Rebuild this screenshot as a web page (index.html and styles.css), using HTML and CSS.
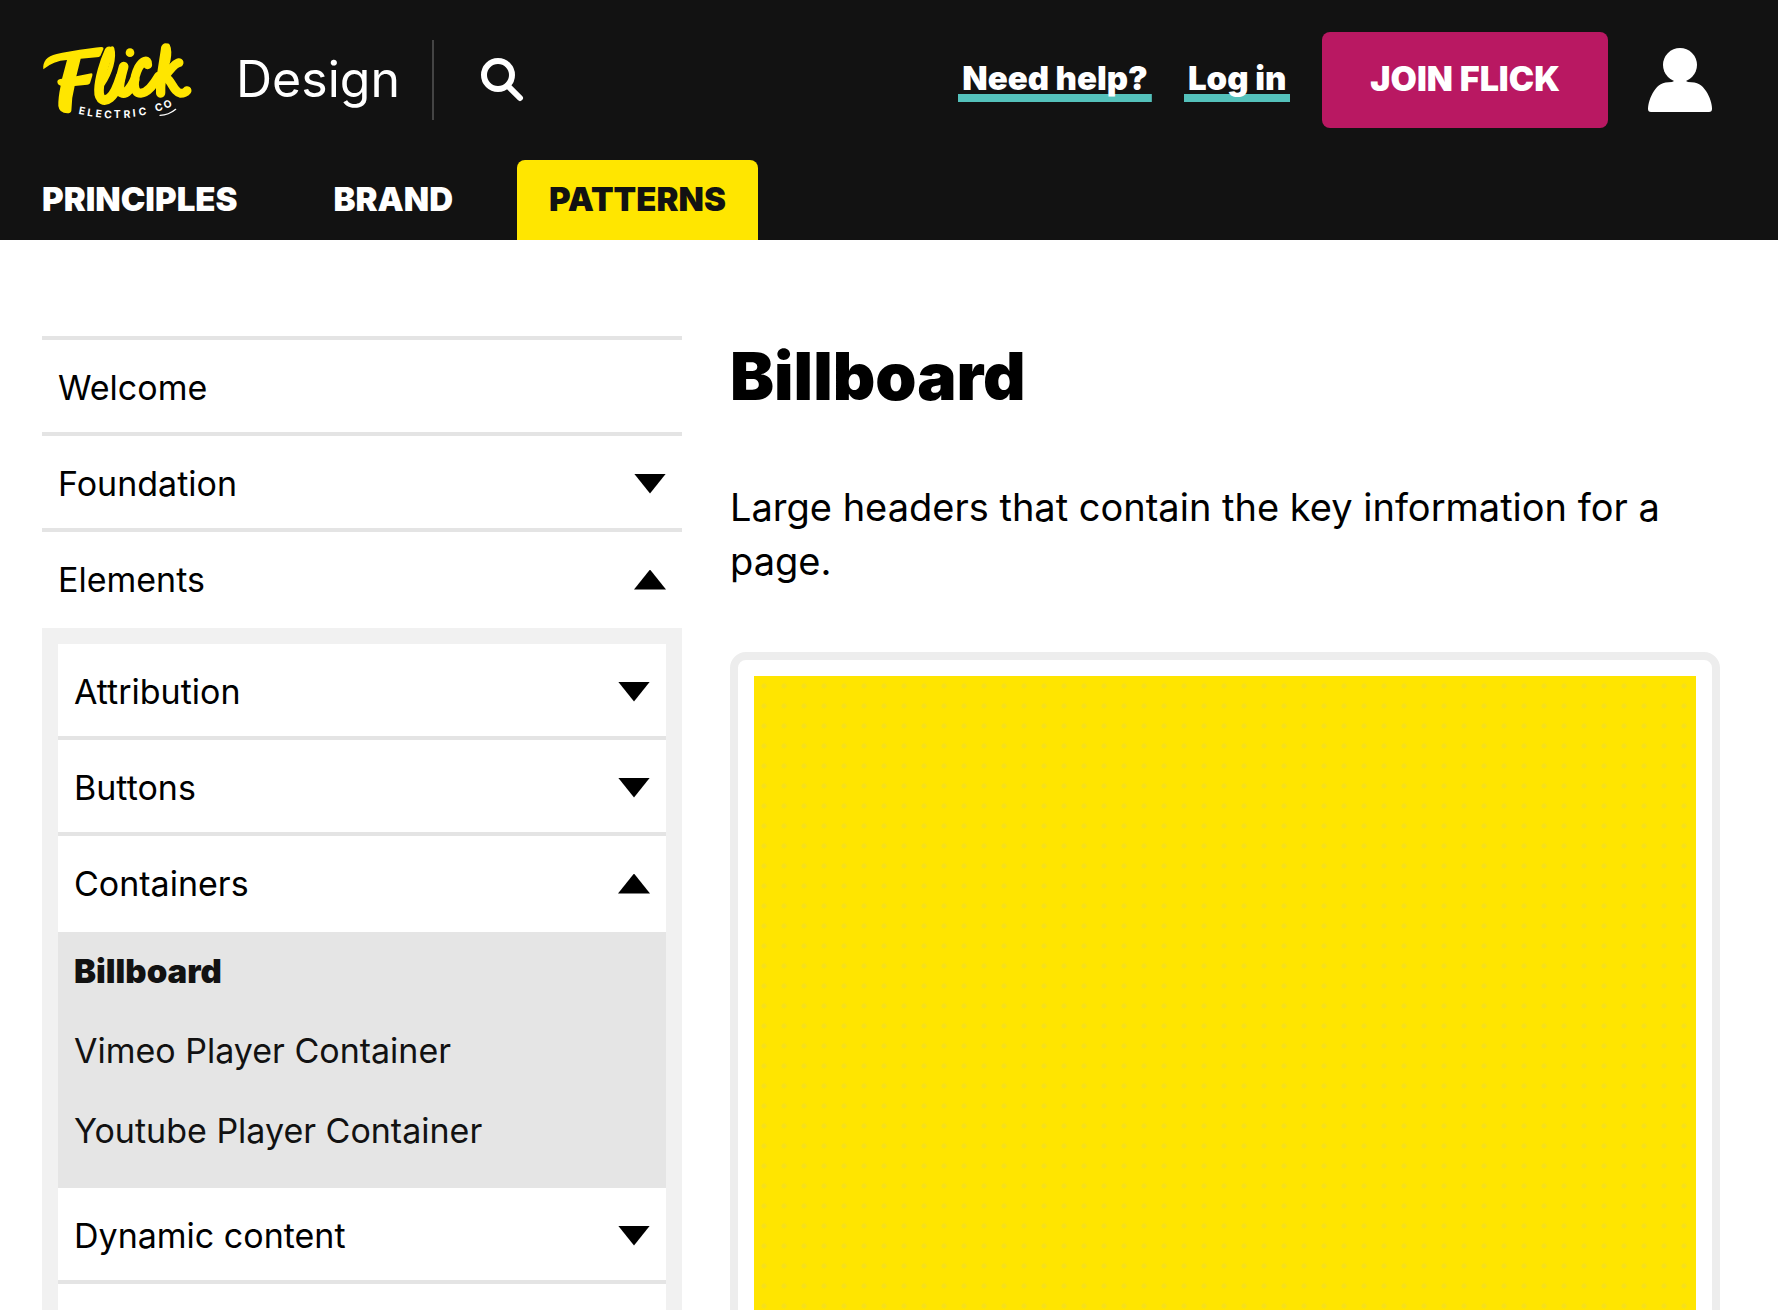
FILE: index.html
```html
<!DOCTYPE html>
<html lang="en">
<head>
<meta charset="utf-8">
<meta name="viewport" content="width=device-width, initial-scale=1">
<title>Billboard - Flick Design</title>
<link rel="stylesheet" href="styles.css">
</head>
<body>
<header class="header">
  <div class="topbar">
    <a class="logo" href="#" aria-label="Flick Electric Co">
      <svg width="152" height="80" viewBox="36 30 456 240" fill="none" stroke-linecap="round" stroke-linejoin="round">
        <path fill="#ffe600" d="M40 118C38 95 50 78 80 72C125 62 175 55 214 51Q222 51 220 58L211 78Q208 82 200 82L152 86L139 139L184 130Q189 130 187 137L180 160Q178 164 172 164L134 168Q124 205 124 243Q122 250 112 250Q88 250 85 228Q84 205 92 167Q82 165 82 154Q84 146 96 146L111 90Q70 92 40 118Z"/>
        <g stroke="#ffe600">
          <path stroke-width="29" d="M238 64C224 95 208 145 207 180C206 212 224 216 240 203C256 190 264 165 272 140"/>
          <path stroke-width="14" d="M246 56C254 85 240 130 218 162"/>
          <path stroke-width="29" d="M281 110C271 145 263 178 275 188C288 194 302 176 314 150"/>
          <path stroke-width="27" d="M353 104C354 86 338 92 326 112C308 148 308 190 332 190C354 188 370 165 386 138"/>
          <path stroke-width="28" d="M407 54C404 85 390 140 392 189"/>
          <path stroke-width="14" d="M413 48C423 70 412 110 398 138"/>
          <path stroke-width="27" d="M447 98C436 100 420 118 402 142"/>
          <path stroke-width="27" d="M406 142C426 150 430 186 452 190C462 190 468 186 471 182"/>
        </g>
        <circle cx="300" cy="68" r="13" fill="#ffe600"/>
        <text class="logo-text" x="145 170 196 222 251 281 309 328 379 406" y="251 257 261 264 265 264 260 257 246 237" rotate="11 9 6 3 0 -3 -6 -9 -18 -22">ELECTRICCO</text>
        <path stroke="#fff" stroke-width="4" d="M390 256Q416 256 437 238"/>
      </svg>
    </a>
    <span class="product">Design</span>
    <button class="icon-button search" aria-label="Search">
      <svg width="44" height="46" viewBox="0 0 44 46" fill="none" stroke="#fff" stroke-linecap="round">
        <circle cx="18" cy="18" r="14" stroke-width="6"/>
        <path stroke-width="6" d="M28 29L40 41"/>
      </svg>
    </button>
    <div class="account">
      <a class="text-link" href="#">Need help?</a>
      <a class="text-link" href="#">Log in</a>
      <button class="join">JOIN FLICK</button>
      <button class="icon-button user" aria-label="My account">
        <svg width="64" height="64" viewBox="0 0 64 64" fill="#fff">
          <circle cx="32" cy="17" r="17"/>
          <path d="M24 34L28 32H36L40 34C50 34 54 37 58 43C62 49 64 56 64 61Q64 64 61 64H3Q0 64 0 61C0 56 2 49 6 43C10 37 14 34 24 34Z"/>
        </svg>
      </button>
    </div>
  </div>
  <nav class="tabs" aria-label="Sections">
    <a class="tab" href="#">PRINCIPLES</a>
    <a class="tab" href="#">BRAND</a>
    <a class="tab tab-active" href="#" aria-current="page">PATTERNS</a>
  </nav>
</header>
<div class="content">
  <nav class="sidebar" aria-label="Patterns">
    <a class="row" href="#">Welcome</a>
    <button class="row">Foundation<span class="arrow"></span></button>
    <button class="row row-open" aria-expanded="true">Elements<span class="arrow arrow-up"></span></button>
    <div class="group">
      <button class="row">Attribution<span class="arrow"></span></button>
      <button class="row">Buttons<span class="arrow"></span></button>
      <button class="row row-open" aria-expanded="true">Containers<span class="arrow arrow-up"></span></button>
      <div class="pages">
        <a class="page-link page-current" href="#" aria-current="page">Billboard</a>
        <a class="page-link" href="#">Vimeo Player Container</a>
        <a class="page-link" href="#">Youtube Player Container</a>
      </div>
      <button class="row">Dynamic content<span class="arrow"></span></button>
      <button class="row" aria-label="More elements"></button>
    </div>
  </nav>
  <main class="main">
    <h1 class="title">Billboard</h1>
    <p class="intro">Large headers that contain the key information for a page.</p>
    <div class="frame"><div class="billboard"></div></div>
  </main>
</div>
</body>
</html>
```
FILE: styles.css
```css
* { box-sizing: border-box; }

body {
  display: flex;
  flex-direction: column;
  height: 100vh;
  margin: 0;
  overflow: hidden;
  background: #fff;
  color: #000;
  font-family: Inter, "Liberation Sans", sans-serif;
  font-size: 34px;
  line-height: 40px;
}

a { color: inherit; text-decoration: none; }

button {
  margin: 0;
  padding: 0;
  border: 0;
  background: none;
  color: inherit;
  font: inherit;
  text-align: left;
  cursor: pointer;
}

svg { display: block; }

.header {
  flex: none;
  background: #121212;
  color: #fff;
}

.topbar {
  display: flex;
  align-items: center;
  height: 160px;
  padding: 0 66px 0 42px;
}

.logo-text {
  fill: #fff;
  font-size: 31px;
  font-weight: 700;
}

.product {
  display: flex;
  align-items: center;
  height: 80px;
  margin-left: 42px;
  padding: 0 32px 2px 0;
  border-right: 2px solid #444;
  font-size: 50px;
}

.search { margin-left: 46px; }

.account {
  display: flex;
  align-items: center;
  gap: 32px;
  margin-left: auto;
}

.text-link {
  padding: 0 4px 4px;
  background: linear-gradient(#54c1bb, #54c1bb) bottom / 100% 8px no-repeat;
  font-size: 33px;
  font-weight: 900;
}

.join {
  height: 96px;
  padding: 0 48px 2px;
  border-radius: 8px;
  background: #b91862;
  font-weight: 900;
}

.user { margin-left: 8px; }

.tabs {
  display: flex;
  gap: 32px;
  padding: 0 10px;
}

.tab {
  padding: 0 32px 2px;
  border-radius: 8px 8px 0 0;
  font-size: 33px;
  font-weight: 900;
  line-height: 78px;
}

.tab-active {
  background: #ffe600;
  color: #121212;
}

.content {
  display: grid;
  grid-template-columns: 640fr 990fr;
  gap: 48px;
  flex: 1;
  min-height: 0;
  padding: 96px 58px 0 42px;
}

.sidebar { border-top: 4px solid #e4e4e4; }

.row {
  display: flex;
  align-items: center;
  justify-content: space-between;
  width: 100%;
  height: 96px;
  padding: 3px 16px 0;
  border-bottom: 4px solid #e4e4e4;
  background: #fff;
}

.row-open { border-bottom-color: #fff; }

.arrow {
  width: 32px;
  height: 20px;
  background: #000;
  clip-path: polygon(0 0, 100% 0, 50% 100%);
}

.arrow-up { clip-path: polygon(50% 0, 100% 100%, 0 100%); }

.group {
  padding: 16px;
  background: #f1f1f1;
}

.pages {
  padding-bottom: 16px;
  background: #e5e5e5;
  color: #121212;
}

.page-link {
  display: block;
  padding: 0 16px 2px;
  line-height: 78px;
}

.page-current {
  font-size: 33px;
  font-weight: 900;
}

.main {
  display: flex;
  flex-direction: column;
}

.title {
  margin: 0 0 64px;
  font-size: 66px;
  font-weight: 900;
  line-height: 80px;
}

.intro {
  margin: 0 0 64px;
  font-size: 38px;
  line-height: 54px;
}

.frame {
  flex: none;
  padding: 16px;
  border: 8px solid #ededed;
  border-radius: 16px;
}

.billboard {
  height: 1000px;
  background: radial-gradient(circle at center, #f5df1c 0 2px, #ffe500 3px) 0 0 / 20px 20px;
}
```
